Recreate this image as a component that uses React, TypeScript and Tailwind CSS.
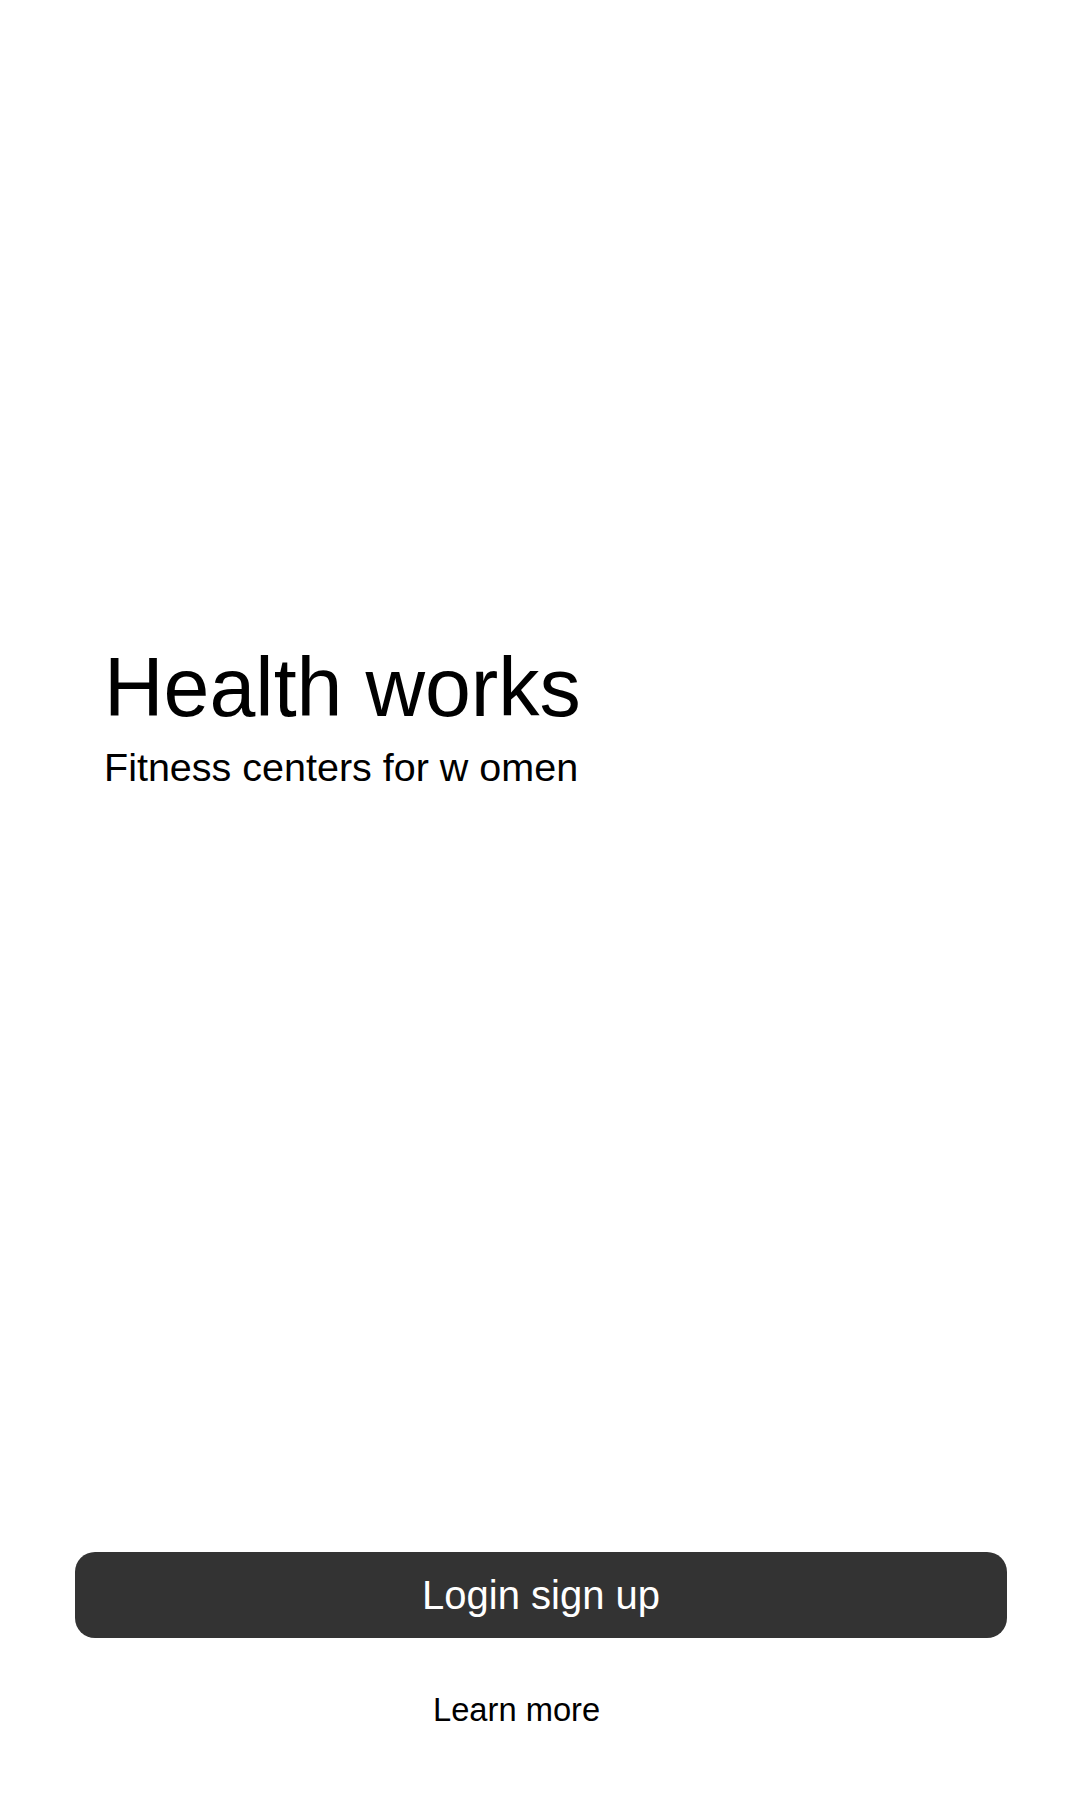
import React from "react";

export default function App() {
  return (
    <div
      className="w-full h-[1800px] bg-white flex flex-col text-black"
      style={{ fontFamily: '"Liberation Sans", Arial, sans-serif' }}
    >
      <div className="pt-[646px] pl-[104px] flex flex-col">
        <h1 className="text-[82.5px] leading-none font-normal">Health works</h1>
        <p className="text-[39.5px] leading-none mt-[19px]">Fitness centers for w omen</p>
      </div>
      <div className="mt-auto pb-[73px] flex flex-col">
        <button className="ml-[75px] mr-[73px] h-[86px] rounded-[20px] bg-[#333333] text-white text-[40px] leading-none flex items-center justify-center">
          Login sign up
        </button>
        <button className="self-start ml-[433px] mt-[56px] text-[32.7px] leading-none text-black">
          Learn more
        </button>
      </div>
    </div>
  );
}
